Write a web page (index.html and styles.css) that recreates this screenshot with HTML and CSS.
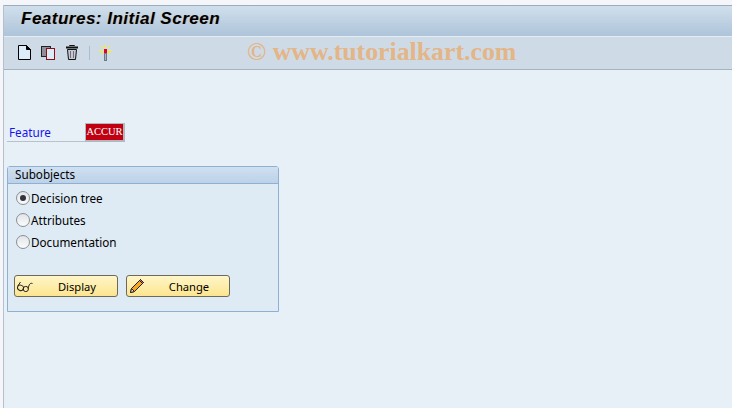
FILE: index.html
```html
<!DOCTYPE html>
<html lang="en">
<head>
  <meta charset="UTF-8" />
  <title>Features: Initial Screen</title>
  <link rel="stylesheet" href="styles.css">
</head>
<body>
  <div class="window">
    <div class="title-bar">
      <h1>Features: Initial Screen</h1>
    </div>
    <div class="toolbar">
      <svg class="tool" width="16" height="16" viewBox="0 0 16 16">
        <path d="M2.500 0.500H10.500L14.500 4.500V14.500H2.500Z" fill="#dcecf8" stroke="#000" />
        <path d="M10.500 0.500V4.500H14.500Z" fill="#000" stroke="#000" />
      </svg>
      <svg class="tool" width="16" height="16" viewBox="0 0 16 16">
        <rect x="1.500" y="1.500" width="9" height="10" fill="#8f8f9c" stroke="#222" />
        <rect x="6.500" y="3.500" width="8" height="11" fill="#dcecf8" stroke="#8c0f14" />
      </svg>
      <svg class="tool" width="16" height="16" viewBox="0 0 16 16">
        <path d="M5.500 1V0.500H10.500V1" fill="none" stroke="#111" />
        <path d="M2 2.500H14" fill="none" stroke="#111" stroke-width="2" />
        <path d="M3.500 4.500L4.500 14.500H11.500L12.500 4.500Z" fill="#c6c8d2" stroke="#111" />
        <path d="M6.500 6V13M9.500 6V13" stroke="#6e7080" />
      </svg>
      <span class="tool-sep"></span>
      <svg class="tool" width="14" height="16" viewBox="0 0 14 16">
        <path d="M6.500 0V3M2 1L4.500 3.500M11 1L8.500 3.500M0 5.500H4M9 5.500H13M2 9L4.500 7.500M11 9L8.500 7.500" stroke="#fff21a" />
        <rect x="5.500" y="8.500" width="2" height="7" fill="#a9b6c4" stroke="#6b7a8a" />
        <rect x="5" y="4" width="3" height="4" fill="#e8001c" />
      </svg>
      <span class="watermark">© www.tutorialkart.com</span>
    </div>
    <main class="content">
      <div class="field-row">
        <label class="field-label">Feature</label>
        <span class="field-value">ACCUR</span>
      </div>
      <section class="group">
        <div class="group-head">Subobjects</div>
        <div class="group-body">
          <label class="radio"><span class="radio-mark on"></span>Decision tree</label>
          <label class="radio"><span class="radio-mark"></span>Attributes</label>
          <label class="radio"><span class="radio-mark"></span>Documentation</label>
          <div class="actions">
            <button class="btn">
              <svg class="btn-icon" width="16" height="15" viewBox="0 0 16 15">
                <path d="M3.500 4L0.800 8" fill="none" stroke="#222" />
                <ellipse cx="3.500" cy="9.800" rx="3" ry="2.700" transform="rotate(25 3.500 9.800)" fill="none" stroke="#222" />
                <ellipse cx="8.800" cy="11" rx="2.600" ry="2.600" fill="none" stroke="#222" />
                <path d="M6.300 10L6.800 10.300M11.200 10.500C11.800 7 13 4.500 15.500 5.500" fill="none" stroke="#222" />
              </svg>
              Display
            </button>
            <button class="btn">
              <svg class="btn-icon" width="16" height="16" viewBox="0 0 16 16">
                <path d="M1.500 14.500L2.500 10.500L11.500 1.500L14.500 4.500L5.500 13.500Z" fill="#f5a623" stroke="#222" />
                <path d="M2.500 10.500L5.500 13.500L1.500 14.500Z" fill="#f6e3c0" stroke="#222" />
                <path d="M10.500 2.500L13.500 5.500L14.500 4.500L11.500 1.500Z" fill="#d8607a" stroke="#222" />
              </svg>
              Change
            </button>
          </div>
        </div>
      </section>
    </main>
  </div>
</body>
</html>
```

FILE: styles.css
```css
* {
  margin: 0;
  padding: 0;
  box-sizing: border-box;
}
html, body {
  height: 100%;
}
body {
  overflow: hidden;
  background: #f5f6fa;
  padding: 5px 0 0 3px;
  font-family: 'Noto Sans', Tahoma, sans-serif;
  font-size: 11.7px;
  color: #000;
}
.window {
  height: 403px;
  border-left: 1px solid #b5c0cc;
  background: #e8f0f7;
}
.title-bar {
  height: 32px;
  padding-left: 17px;
  border-top: 1px solid #9eabbb;
  border-bottom: 1px solid #e4edf4;
  background: linear-gradient(#d0dfec, #aec4da);
}
.title-bar h1 {
  font-family: 'Liberation Sans', Arial, sans-serif;
  font-size: 17px;
  font-style: italic;
  font-weight: bold;
  line-height: 26px;
  letter-spacing: 0.5px;
  text-shadow: 1px 0 0 rgba(200, 120, 30, 0.35);
}
.toolbar {
  position: relative;
  display: flex;
  align-items: center;
  height: 33px;
  padding-left: 12px;
  border-bottom: 1px solid #a5b2c0;
  background: #cedbe6;
}
.tool {
  margin-right: 8px;
  flex: none;
}
.tool-sep {
  width: 1px;
  height: 14px;
  margin: 0 9px 0 1px;
  background: #a9bed2;
}
.watermark {
  position: absolute;
  left: 243px;
  top: 0;
  font-family: 'Liberation Serif', 'Times New Roman', serif;
  font-size: 25.8px;
  font-weight: bold;
  color: #e3b587;
  white-space: nowrap;
}
.content {
  padding: 53px 0 0 3px;
}
.field-row {
  display: flex;
  align-items: center;
  width: 118px;
  height: 19px;
}
.field-label {
  flex: 1;
  padding: 1px 0 0 2px;
  line-height: 17px;
  color: #1414f0;
  border-bottom: 1px solid #b9c2cb;
}
.field-value {
  width: 40px;
  height: 19px;
  border: 1px solid #b4b8bd;
  border-width: 1px 2px 2px 1px;
  background: #c00012;
  color: #fff;
  font-family: 'Liberation Serif', 'Times New Roman', serif;
  font-size: 10.5px;
  line-height: 16px;
  text-align: center;
}
.group {
  width: 272px;
  margin-top: 24px;
  border: 1px solid #8fb0d0;
  border-radius: 3px 3px 0 0;
  background: #deeaf4;
}
.group-head {
  height: 17px;
  padding-left: 7px;
  line-height: 15px;
  border-bottom: 1px solid #8fb0d0;
  background: linear-gradient(#cfe0f0, #bcd2e8);
}
.group-body {
  height: 127px;
  padding: 3px 6px 0;
}
.radio {
  display: flex;
  align-items: center;
  height: 22px;
  padding-left: 2px;
}
.radio-mark {
  display: flex;
  align-items: center;
  justify-content: center;
  width: 14px;
  height: 14px;
  margin-right: 1px;
  border: 1px solid #8a8f96;
  border-radius: 50%;
  background: linear-gradient(#e2e4e8, #fbfbfb);
}
.radio-mark.on::after {
  content: "";
  width: 6px;
  height: 6px;
  border-radius: 50%;
  background: #33333d;
}
.actions {
  display: flex;
  gap: 8px;
  margin-top: 22px;
}
.btn {
  position: relative;
  width: 104px;
  height: 22px;
  padding-left: 22px;
  border: 1px solid #6d6a5c;
  border-radius: 3px;
  background: linear-gradient(#fff6c8, #fde58f);
  font: inherit;
  font-size: 11.2px;
  color: #000;
}
.btn-icon {
  position: absolute;
  left: 2px;
  top: 2px;
}
```
